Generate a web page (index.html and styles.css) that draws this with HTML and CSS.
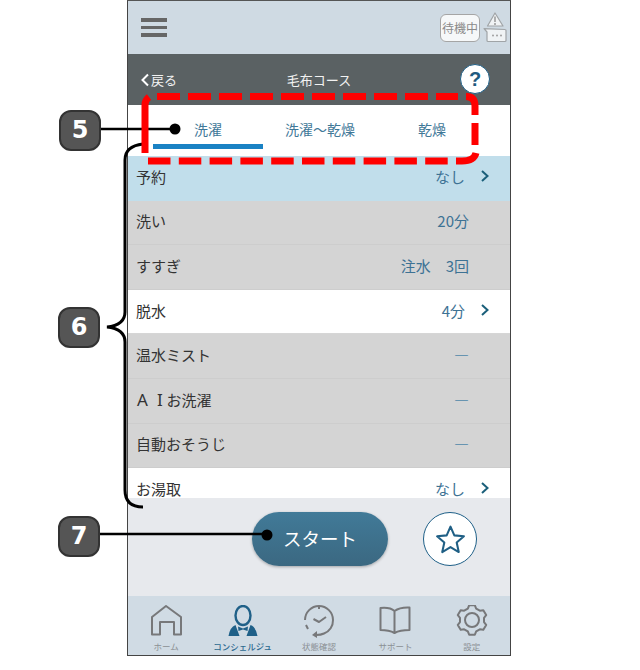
FILE: index.html
```html
<!DOCTYPE html>
<html lang="ja">
<head>
    <meta charset="UTF-8">
    <title>毛布コース</title>
    <link rel="stylesheet" href="styles.css">
</head>
<body>
    <div class="phone">
        <!-- Top bar -->
        <header class="topbar">
            <div class="burger"><span></span><span></span><span></span></div>
            <div class="status">
                <div class="status-box">待機中</div>
                <svg class="status-icon" width="24" height="32" viewBox="0 0 24 32">
                    <path d="M12 1 L20 14 H4.500 Z" fill="#f0f3f5" stroke="#a0a4a7" stroke-width="1.200" stroke-linejoin="round"/>
                    <path d="M12 4.500 V10 M12 11 V13" stroke="#8a8a8a" stroke-width="1.300"/>
                    <path d="M1 16.700 L22 17.500 Q23 17.500 23 18.500 V28.500 Q23 29.500 22 29.500 H5 Q4 29.500 4 28.500 V20 Z" fill="#f0f3f5" stroke="#a0a4a7" stroke-width="1.200" stroke-linejoin="round"/>
                    <circle cx="10" cy="23.500" r="1" fill="#a0a0a0"/><circle cx="14" cy="23.500" r="1" fill="#a0a0a0"/><circle cx="18" cy="23.500" r="1" fill="#a0a0a0"/>
                </svg>
            </div>
        </header>

        <!-- Title bar -->
        <div class="titlebar">
            <div class="back">
                <svg width="10" height="14" viewBox="0 0 10 14"><path d="M8 1.500 L2.500 7 L8 12.500" fill="none" stroke="#fff" stroke-width="2"/></svg>
                <span>戻る</span>
            </div>
            <div class="title">毛布コース</div>
            <div class="help">?</div>
        </div>

        <!-- Tabs -->
        <nav class="tabs">
            <div class="tab active">洗濯</div>
            <div class="tab">洗濯～乾燥</div>
            <div class="tab">乾燥</div>
        </nav>

        <!-- Settings -->
        <div class="rows">
            <div class="row row-blue"><span class="label">予約</span><span class="value">なし</span><svg class="chev" width="10" height="14" viewBox="0 0 10 14"><path d="M2 2 L7.500 7 L2 12" /></svg></div>
            <div class="row row-gray"><span class="label">洗い</span><span class="value">20分</span><span class="nochev"></span></div>
            <div class="row row-gray"><span class="label">すすぎ</span><span class="value">注水　3回</span><span class="nochev"></span></div>
            <div class="row"><span class="label">脱水</span><span class="value">4分</span><svg class="chev" width="10" height="14" viewBox="0 0 10 14"><path d="M2 2 L7.500 7 L2 12" /></svg></div>
            <div class="row row-gray"><span class="label">温水ミスト</span><span class="value dash">―</span><span class="nochev"></span></div>
            <div class="row row-gray"><span class="label"><span class="ai">A I</span>お洗濯</span><span class="value dash">―</span><span class="nochev"></span></div>
            <div class="row row-gray"><span class="label">自動おそうじ</span><span class="value dash">―</span><span class="nochev"></span></div>
            <div class="row"><span class="label">お湯取</span><span class="value">なし</span><svg class="chev" width="10" height="14" viewBox="0 0 10 14"><path d="M2 2 L7.500 7 L2 12" /></svg></div>
        </div>

        <!-- Start -->
        <div class="actions">
            <div class="start">スタート</div>
            <div class="fav">
                <svg width="33" height="33" viewBox="0 0 32 32"><path d="M16 3.500 L19.700 12 L29 12.900 L22 19 L24 28.200 L16 23.400 L8 28.200 L10 19 L3 12.900 L12.300 12 Z" fill="none" stroke="#1f5f85" stroke-width="2" stroke-linejoin="round"/></svg>
            </div>
        </div>

        <!-- Bottom nav -->
        <footer class="bottom">
            <div class="nav-item">
                <svg width="32" height="34" viewBox="0 0 32 34" class="ico"><path d="M16 1 L31 12 V29.500 H24 V17 H10 V29.500 H2 V12 Z"/></svg>
                <span>ホーム</span>
            </div>
            <div class="nav-item current">
                <svg width="32" height="34" viewBox="0 0 32 34">
                    <ellipse cx="16" cy="10.500" rx="7.500" ry="9.500" fill="none" stroke="#1f6088" stroke-width="2.400"/>
                    <path d="M1.500 31 Q3 22 8.500 20 L12.500 31 Z M30.500 31 Q29 22 23.500 20 L19.500 31 Z" fill="#1f6088"/>
                    <path d="M11 21.500 L16 23.500 L21 21.500 L20.500 26 L16 24.500 L11.500 26 Z" fill="#1f6088"/>
                </svg>
                <span>コンシェルジュ</span>
            </div>
            <div class="nav-item">
                <svg width="32" height="34" viewBox="0 0 32 34" class="ico">
                    <path d="M2 15 A14 14 0 0 1 30 15 A14 14 0 0 1 21 28.500 Q18 30 13 30"/>
                    <path d="M3 20 L5 24 M16 2 V4"/>
                    <path d="M10.500 14 L16 17 L23 12"/>
                    <path d="M9 30 L14 26 V33 Z" class="ico-fill"/>
                </svg>
                <span>状態確認</span>
            </div>
            <div class="nav-item">
                <svg width="32" height="34" viewBox="0 0 32 34" class="ico">
                    <path d="M1.500 3 Q11 2 15.500 6 Q21 2 30.500 2.500 V25 Q21 25 15.500 28 Q10 25 1.500 25 Z M15.500 6 V28"/>
                </svg>
                <span>サポート</span>
            </div>
            <div class="nav-item">
                <svg width="32" height="34" viewBox="0 0 32 34" class="ico">
                    <circle cx="16" cy="15" r="7"/>
                    <path transform="translate(0 -1)" d="M13.140 1.280 H18.860 L20.170 4.540 L23.840 6.650 L27.320 6.160 L30.180 11.120 L28.010 13.880 V18.120 L30.180 20.880 L27.320 25.840 L23.840 25.350 L20.170 27.460 L18.860 30.720 H13.140 L11.830 27.460 L8.160 25.350 L4.680 25.840 L1.820 20.880 L3.990 18.120 V13.880 L1.820 11.120 L4.680 6.160 L8.160 6.650 L11.830 4.540 Z"/>
                </svg>
                <span>設定</span>
            </div>
        </footer>
    </div>

    <!-- Callouts over the screenshot -->
    <svg class="overlay" width="640" height="670" viewBox="0 0 640 670">
        <path d="M100 129 H176" stroke="#000" stroke-width="2.500"/>
        <circle cx="175" cy="129" r="5.500" fill="#000"/>
        <path d="M143 144 Q125 146 125 160 V312 Q125 325 107 327 Q125 329 125 342 V490 Q125 507 143 507" fill="none" stroke="#000" stroke-width="3"/>
        <path d="M98 534 H268" stroke="#000" stroke-width="2.500"/>
        <circle cx="267" cy="535" r="5.500" fill="#000"/>
        <g fill="none" stroke="#f00" stroke-width="7">
            <path d="M157 96.500 H458" stroke-dasharray="23 8"/>
            <path d="M466 96.500 Q475 96.500 475 106 V115"/>
            <path d="M475 123 V145"/>
            <path d="M456 161 H462 Q474 161 476 153"/>
            <path d="M148 161 H448" stroke-dasharray="22.500 8.300"/>
            <path d="M145 153 V105 Q145 100 149 97"/>
        </g>
    </svg>
    <div class="badge badge-5">5</div>
    <div class="badge badge-6">6</div>
    <div class="badge badge-7">7</div>
</body>
</html>
```

FILE: styles.css
```css
* { margin: 0; padding: 0; box-sizing: border-box; }
body { background: #fff; font-family: "Noto Sans CJK JP", "Noto Sans", sans-serif; width: 640px; height: 670px; overflow: hidden; position: relative; }

.phone { width: 384px; height: 656px; margin-left: 127px; border: 1px solid #444; border-top-color: #555; display: flex; flex-direction: column; overflow: hidden; }

/* Top bar */
.topbar { height: 53px; background: #cfdae3; display: flex; align-items: center; justify-content: space-between; padding: 0 3px 0 13px; flex-shrink: 0; }
.burger { width: 26px; display: flex; flex-direction: column; gap: 4px; }
.burger span { height: 3.500px; background: #666; }
.status { display: flex; align-items: center; gap: 3px; }
.status-box { width: 40px; height: 28px; border: 1.500px solid #a5a5a5; border-radius: 6px; background: #f6f8f9; color: #8a8a8a; font-size: 12px; line-height: 25px; text-align: center; white-space: nowrap; }

/* Title bar */
.titlebar { height: 51px; background: #5a6163; display: flex; align-items: center; position: relative; flex-shrink: 0; color: #f2f2f2; font-size: 13px; }
.back { position: absolute; left: 12px; top: 16px; display: flex; align-items: center; gap: 1px; }
.title { width: 100%; text-align: center; padding-bottom: 1px; }
.help { position: absolute; left: 332px; top: 10px; width: 30px; height: 30px; border-radius: 50%; background: #fff; border: 1px solid #1f6088; color: #1f5a80; font: bold 20px/28px "Liberation Sans", sans-serif; text-align: center; }

/* Tabs */
.tabs { height: 51px; background: #fff; display: flex; padding: 0 22px 0 24px; flex-shrink: 0; }
.tab { flex: 1; text-align: center; color: #3f7898; font-size: 14px; line-height: 49px; position: relative; }
.tab.active::after { content: ""; position: absolute; left: 1px; bottom: 7px; width: 110px; height: 5.500px; background: #1a82c4; }

/* Rows */
.rows { height: 342px; overflow: hidden; flex-shrink: 0; }
.row { height: 44.600px; display: flex; align-items: center; padding: 0 21px 3px 8px; background: #fff; font-size: 15px; color: #333; border-bottom: 1px solid #d6d6d6; }
.row-blue { background: #c1deeb; border-bottom-color: #c1deeb; }
.row-gray { background: #d4d4d4; border-bottom-color: #cdcdcd; }
.label { flex: 1; }
.ai { font-family: "Noto Sans", sans-serif; font-size: 17px; word-spacing: 4.700px; margin-left: 1px; margin-right: 3.700px; }
.value { color: #3d7294; }
.dash { color: #4f86a8; font-weight: 700; }
.chev { width: 10px; height: 14px; margin-left: 15px; margin-right: -1px; }
.chev path { fill: none; stroke: #1a5f7a; stroke-width: 2; }
.nochev { width: 20px; }

/* Start */
.actions { height: 98px; background: #e7e9ed; display: flex; align-items: center; padding: 0 0 16px 124px; flex-shrink: 0; }
.start { width: 136px; height: 54px; border-radius: 27px; background: linear-gradient(#417a98, #3b6881); color: #fff; font-size: 18.500px; line-height: 52px; text-align: center; box-shadow: 0 1px 3px rgba(0, 0, 0, .3); }
.fav { width: 54px; height: 54px; border-radius: 50%; background: #fff; border: 1px solid #1f6088; margin-left: 35px; display: flex; align-items: center; justify-content: center; }

/* Bottom nav */
.bottom { flex: 1; background: #d0dbe4; display: flex; padding-top: 9px; }
.nav-item { flex: 1; display: flex; flex-direction: column; align-items: center; color: #8b9094; font-size: 8.500px; line-height: 11px; }
.nav-item span { margin-top: 2px; white-space: nowrap; }
.nav-item.current { color: #2c6a90; font-weight: 500; }
.ico { fill: none; stroke: #77787a; stroke-width: 2; stroke-linejoin: round; }
.ico-fill { fill: #77787a; stroke: none; }

/* Callouts */
.overlay { position: absolute; left: 0; top: 0; pointer-events: none; }
.badge { position: absolute; width: 42px; height: 41px; border-radius: 12px; background: #555; border: 2px solid #333; color: #fff; font: bold 24px/36px "DejaVu Sans", sans-serif; text-align: center; }
.badge-5 { left: 59px; top: 110px; }
.badge-6 { left: 58px; top: 307px; }
.badge-7 { left: 58px; top: 516px; }
```
